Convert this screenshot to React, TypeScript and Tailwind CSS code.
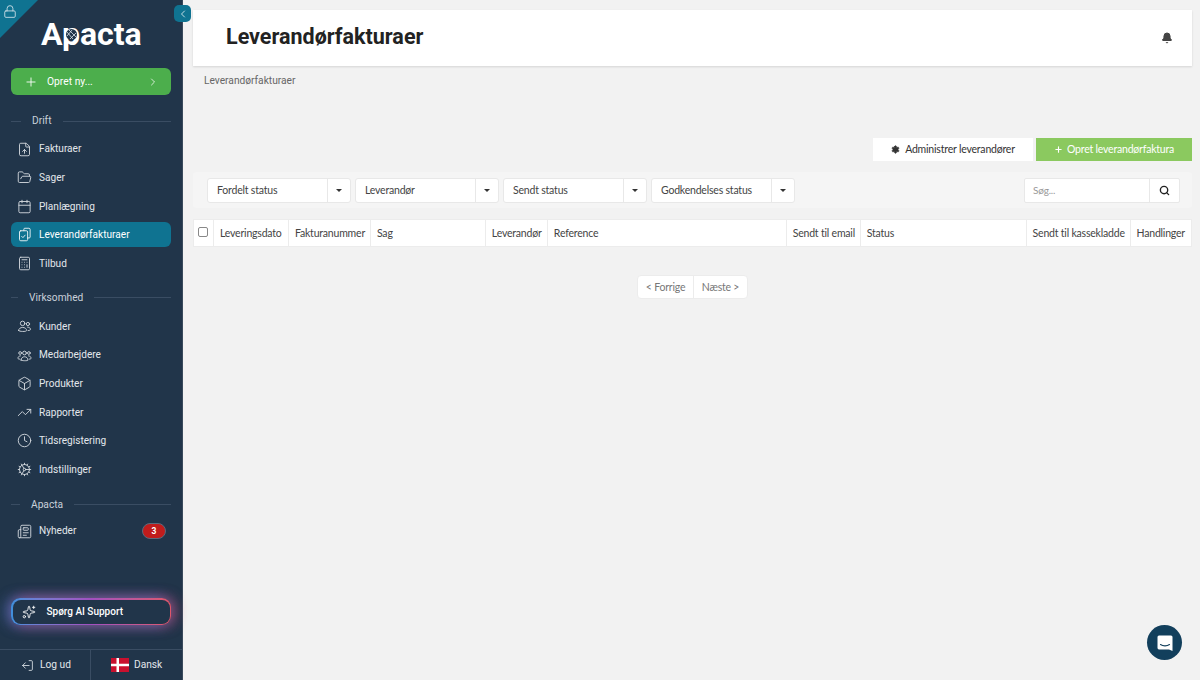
import React from "react";
import { Lock, ChevronLeft, ChevronRight, Plus, FileUp, FolderOpen, Calendar, Calculator, Box, TrendingUp, Clock, Cog, Newspaper, Sparkles, LogOut, Bell, Search, Settings as Gear } from "lucide-react";

type Item = { label: string; icon: React.ReactNode; active?: boolean; badge?: string };
const ic = "w-[15px] h-[15px]";

function Svg({ children }: { children: React.ReactNode }) {
  return (
    <svg viewBox="0 0 24 24" className={ic} fill="none" stroke="currentColor" strokeWidth={1.5} strokeLinecap="round" strokeLinejoin="round">
      {children}
    </svg>
  );
}
const KunderIcon = () => (
  <Svg>
    <circle cx="9" cy="7" r="3.6" />
    <circle cx="17.5" cy="8" r="2.6" />
    <path d="M2.5 18.5c0-3 3-5 6.5-5s6.5 2 6.5 5c0 2-13 2-13 0z" />
    <path d="M17 13c2.6 0 4.6 1.6 4.6 3.6 0 1.2-1.6 1.7-3.6 1.8" />
  </Svg>
);
const MedarbejdereIcon = () => (
  <Svg>
    <circle cx="12" cy="8" r="3" />
    <circle cx="5" cy="8" r="2.2" />
    <circle cx="19" cy="8" r="2.2" />
    <path d="M6.5 19.5c0-3.5 2.5-5.5 5.5-5.5s5.5 2 5.5 5.5c0 1.2-11 1.2-11 0z" />
    <path d="M5.5 12.5C3 12.7 1.5 14.5 1.5 16.5c0 .8 1 1.2 3 1.3" />
    <path d="M18.5 12.5c2.5.2 4 2 4 4 0 .8-1 1.2-3 1.3" />
  </Svg>
);
const DocsIcon = () => (
  <Svg>
    <path d="M11 6V3.5A1.5 1.5 0 0 1 12.5 2H19a2 2 0 0 1 2 2v12a1.5 1.5 0 0 1-1.5 1.5H17" />
    <rect x="4" y="6" width="13" height="16" rx="2" />
    <path d="M7.5 15l2 2 3.5-4" />
  </Svg>
);

const drift: Item[] = [
  { label: "Fakturaer", icon: <FileUp className={ic} strokeWidth={1.5} /> },
  { label: "Sager", icon: <FolderOpen className={ic} strokeWidth={1.5} /> },
  { label: "Planlægning", icon: <Calendar className={ic} strokeWidth={1.5} /> },
  { label: "Leverandørfakturaer", icon: <DocsIcon />, active: true },
  { label: "Tilbud", icon: <Calculator className={ic} strokeWidth={1.5} /> },
];
const virk: Item[] = [
  { label: "Kunder", icon: <KunderIcon /> },
  { label: "Medarbejdere", icon: <MedarbejdereIcon /> },
  { label: "Produkter", icon: <Box className={ic} strokeWidth={1.5} /> },
  { label: "Rapporter", icon: <TrendingUp className={ic} strokeWidth={1.5} /> },
  { label: "Tidsregistering", icon: <Clock className={ic} strokeWidth={1.5} /> },
  { label: "Indstillinger", icon: <Cog className={ic} strokeWidth={1.5} /> },
];

function Row({ item }: { item: Item }) {
  return (
    <div className={`h-[25px] mb-[3.6px] rounded-[6px] pl-[6px] pr-[5px] flex items-center text-[10.1px] text-[#e3e7ec] ${item.active ? "bg-[#0f7391] text-white" : ""}`}>
      <span className="w-[15px] flex justify-center mr-[7px] opacity-90">{item.icon}</span>
      <span className="flex-1">{item.label}</span>
      {item.badge && (
        <span className="w-[24px] h-[16px] rounded-full bg-[#c01c1c] border border-[#5b6a7c] text-white text-[8.5px] font-bold flex items-center justify-center">{item.badge}</span>
      )}
    </div>
  );
}

function Section({ label, lead }: { label: string; lead: string }) {
  return (
    <div className="flex items-center h-[14px] text-[10.2px] text-[#c9d1da]">
      <span className={`h-px bg-[#3a4d63] ${lead}`} />
      <span className="px-[11px]">{label}</span>
      <span className="h-px bg-[#3a4d63] flex-1" />
    </div>
  );
}

function Select({ label }: { label: string }) {
  return (
    <div className="flex h-[25px] bg-white border border-[#e8e8e8] rounded-[3px] text-[#444]">
      <span className="w-[120px] pl-[9px] pt-[1px] flex items-center border-r border-[#e8e8e8]">{label}</span>
      <span className="w-[22px] flex items-center justify-center">
        <span className="w-0 h-0 border-x-[3px] border-x-transparent border-t-[3px] border-t-[#333]" />
      </span>
    </div>
  );
}

const cols: [string, string][] = [
  ["Leveringsdato", "w-[75px]"],
  ["Fakturanummer", "w-[82px]"],
  ["Sag", "w-[115px]"],
  ["Leverandør", "w-[62px]"],
  ["Reference", "w-[239px]"],
  ["Sendt til email", "w-[74px]"],
  ["Status", "w-[166px]"],
  ["Sendt til kassekladde", "w-[104px]"],
  ["Handlinger", "flex-1"],
];

export default function App() {
  return (
    <div className="w-[1200px] h-[680px] flex overflow-hidden bg-[#f2f2f2] font-['Lato',sans-serif] text-[10.5px] tracking-[-0.2px]">
      <aside className="relative w-[183px] h-full shrink-0 bg-[#21354a] border-r border-[#3a4a5c] flex flex-col font-['Roboto',sans-serif] tracking-normal">
        <div className="absolute left-0 top-0 w-0 h-0 border-t-[38px] border-t-[#0f7391] border-r-[38px] border-r-transparent" />
        <Lock className="absolute left-[3px] top-[4px] w-[14px] h-[15px] text-[#cfe0e8]" strokeWidth={1.5} />
        <div className="absolute left-[174px] top-[5px] w-[17px] h-[17px] rounded-[5px] bg-[#0f7391] flex items-center justify-center z-10">
          <ChevronLeft className="w-[12px] h-[12px] text-white" strokeWidth={1.5} />
        </div>

        <div className="h-[68px] pt-[15px] pl-[41px] relative">
          <div className="text-[32px] leading-[38px] font-bold text-white">Apacta</div>
          <svg width="11" height="11" viewBox="0 0 11 11" className="absolute left-[66px] top-[29px]">
            <circle cx="5.5" cy="5.5" r="5.5" fill="#21354a" />
            <path d="M1 3l6 7M3 1l7 7M1 7l5-6M4 10l6-6" stroke="#dfe6ec" strokeWidth="0.8" />
          </svg>
        </div>

        <div className="mx-[11px] h-[27px] rounded-[6px] bg-[#4cae4c] flex items-center text-white text-[10.3px] pl-[13px] pr-[12px] shrink-0">
          <Plus className="w-[14px] h-[14px] mr-[9px]" strokeWidth={1.5} />
          <span className="flex-1">Opret ny...</span>
          <ChevronRight className="w-[12px] h-[12px]" strokeWidth={1.5} />
        </div>

        <div className="mx-[11px] mt-[19px]">
          <Section label="Drift" lead="w-[10px]" />
          <div className="mt-[8.5px]">{drift.map((i) => <Row key={i.label} item={i} />)}</div>
        </div>
        <div className="mx-[11px] mt-[11.5px]">
          <Section label="Virksomhed" lead="w-[7px]" />
          <div className="mt-[9px]">{virk.map((i) => <Row key={i.label} item={i} />)}</div>
        </div>
        <div className="mx-[11px] mt-[12px]">
          <Section label="Apacta" lead="w-[9px]" />
          <div className="mt-[7px]"><Row item={{ label: "Nyheder", icon: <Newspaper className={ic} strokeWidth={1.5} />, badge: "3" }} /></div>
        </div>

        <div className="flex-1" />
        <div className="mx-[11px] h-[27px] rounded-[9px] p-[1.5px] bg-gradient-to-r from-[#3f8fdc] via-[#a24fc0] to-[#e0566a] shadow-[-5px_0_14px_rgba(63,143,220,0.4),5px_0_14px_rgba(224,86,106,0.4),0_0_14px_rgba(170,80,190,0.6)] shrink-0">
          <div className="h-full rounded-[8px] bg-[#21354a] flex items-center pl-[9px] text-white text-[10px] font-medium">
            <Sparkles className="w-[14px] h-[14px] mr-[11px]" strokeWidth={1.5} />
            Spørg AI Support
          </div>
        </div>
        <div className="mt-[24px] h-[31px] border-t border-[#3a4d63] flex text-[10.2px] text-[#e3e7ec] shrink-0">
          <div className="w-[91px] border-r border-[#3a4d63] flex items-center pl-[21px]">
            <LogOut className="w-[13px] h-[13px] mr-[6px] rotate-180" strokeWidth={1.5} />
            Log ud
          </div>
          <div className="flex-1 flex items-center pl-[20px]">
            <svg width="18" height="14" viewBox="0 0 18 14" className="mr-[5px]">
              <rect width="18" height="14" fill="#c8102e" />
              <rect x="5.5" width="2.5" height="14" fill="#fff" />
              <rect y="5.75" width="18" height="2.5" fill="#fff" />
            </svg>
            Dansk
          </div>
        </div>
      </aside>

      <main className="relative flex-1 min-w-0 pl-[10px] pr-[8px] pt-[10px]">
        <header className="h-[56px] bg-white shadow-[0_1px_2px_rgba(0,0,0,0.12)] flex items-center pl-[33px] pr-[19px]">
          <h1 className="flex-1 text-[21.5px] tracking-normal font-bold text-[#222] font-['Roboto',sans-serif] mb-[2px]">Leverandørfakturaer</h1>
          <Bell className="w-[12px] h-[12px] text-[#444] fill-[#444]" />
        </header>
        <div className="mt-[8px] ml-[11px] h-[14px] text-[10.2px] tracking-normal leading-[14px] text-[#666] font-['Roboto',sans-serif]">Leverandørfakturaer</div>

        <div className="mt-[50px] flex justify-end gap-[3px] h-[23px]">
          <div className="w-[160px] bg-white flex items-center justify-center text-[#333]">
            <Gear className="w-[9px] h-[9px] mr-[5px] fill-[#333]" />
            Administrer leverandører
          </div>
          <div className="w-[156px] bg-[#8bc95f] flex items-center justify-center text-white">
            <Plus className="w-[9px] h-[9px] mr-[4px]" strokeWidth={3} />
            Opret leverandørfaktura
          </div>
        </div>

        <div className="mt-[11px] h-[36px] bg-[#f5f5f5] rounded-[3px] flex items-center pl-[14px] pr-[12px] gap-[4px]">
          <Select label="Fordelt status" />
          <Select label="Leverandør" />
          <Select label="Sendt status" />
          <Select label="Godkendelses status" />
          <div className="flex-1" />
          <div className="flex h-[25px] bg-white border border-[#e8e8e8] rounded-[2px] text-[10px]">
            <span className="w-[125px] pl-[8px] flex items-center text-[#999] border-r border-[#e8e8e8]">Søg...</span>
            <span className="w-[29px] flex items-center justify-center">
              <Search className="w-[11px] h-[11px] text-[#222]" strokeWidth={3} />
            </span>
          </div>
        </div>

        <div className="mt-[11px] h-[28px] bg-white border border-[#ececec] flex text-[#444]">
          <div className="w-[20px] border-r border-[#ececec] flex justify-center pt-[7px]">
            <span className="w-[10px] h-[10px] border border-[#888] rounded-[2px] bg-white" />
          </div>
          {cols.map(([l, w]) => (
            <div key={l} className={`${w} px-[6px] pt-[2px] flex items-center whitespace-nowrap border-r border-[#ececec] last:border-r-0`}>{l}</div>
          ))}
        </div>

        <div className="mt-[28px] flex justify-center">
          <div className="flex h-[24px] bg-white border border-[#ececec] rounded-[4px] text-[#777]">
            <span className="w-[56px] pt-[1px] flex items-center justify-center border-r border-[#ececec]">&lt; Forrige</span>
            <span className="w-[53px] pt-[1px] flex items-center justify-center">Næste &gt;</span>
          </div>
        </div>

        <div className="absolute left-[964px] top-[625px] w-[35px] h-[35px] rounded-full bg-[#123f5c] flex items-center justify-center">
          <svg width="18" height="18" viewBox="0 0 18 18">
            <path d="M3 1.5h12a1.5 1.5 0 0 1 1.5 1.5v14l-3.5-1.6H3A1.5 1.5 0 0 1 1.5 14V3A1.5 1.5 0 0 1 3 1.5z" fill="#fff" />
            <path d="M4.5 10.5c2.5 1.8 6.5 1.8 9 0" stroke="#123f5c" strokeWidth="1.1" fill="none" strokeLinecap="round" />
          </svg>
        </div>
      </main>
    </div>
  );
}
